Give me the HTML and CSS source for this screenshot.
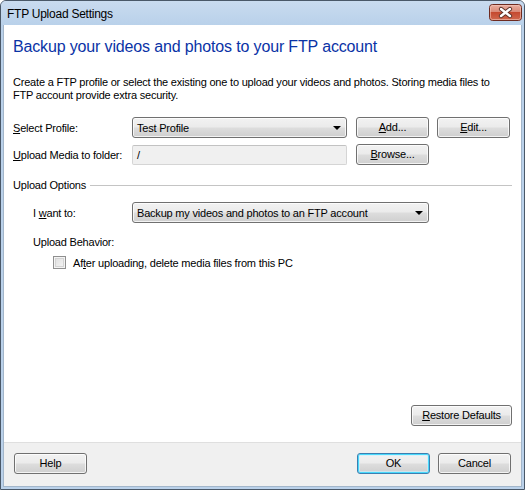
FILE: index.html
```html
<!DOCTYPE html>
<html>
<head>
<meta charset="utf-8">
<link rel="stylesheet" href="styles.css">
</head>
<body>
<div class="window">
  <div class="titlebar">
    <span class="title">FTP Upload Settings</span>
    <span class="close">
      <svg width="33" height="17" viewBox="0 0 33 17">
        <defs>
          <linearGradient id="cg" x1="0" y1="0" x2="0" y2="1">
            <stop offset="0" stop-color="#eab0a2"/>
            <stop offset="0.45" stop-color="#d98a78"/>
            <stop offset="0.5" stop-color="#c54a30"/>
            <stop offset="1" stop-color="#d06a50"/>
          </linearGradient>
        </defs>
        <rect x="0.5" y="0.5" width="32" height="16" rx="3" fill="url(#cg)" stroke="#6e2b20"/>
        <rect x="1.5" y="1.5" width="30" height="14" rx="2" fill="none" stroke="#f3c8bc" stroke-opacity="0.6"/>
        <path d="M12 5 L21 12 M21 5 L12 12" stroke="#5b3128" stroke-width="4.2" stroke-linecap="round"/>
        <path d="M12 5 L21 12 M21 5 L12 12" stroke="#ffffff" stroke-width="2.4" stroke-linecap="round"/>
      </svg>
    </span>
  </div>
  <div class="client">
    <div class="main">
      <h1 class="heading">Backup your videos and photos to your FTP account</h1>
      <p class="desc">Create a FTP profile or select the existing one to upload your videos and photos. Storing media files to<br>FTP account provide extra security.</p>
      <div class="row row-first">
        <span class="lbl"><u>S</u>elect Profile:</span>
        <div class="combo combo-profile"><span class="combo-text">Test Profile</span><span class="arrow"></span></div>
        <button class="btn"><u>A</u>dd...</button>
        <button class="btn"><u>E</u>dit...</button>
      </div>
      <div class="row row-second">
        <span class="lbl"><u>U</u>pload Media to folder:</span>
        <div class="textbox">/</div>
        <button class="btn"><u>B</u>rowse...</button>
      </div>
      <div class="group">
        <span class="group-text">Upload Options</span>
        <span class="rule"></span>
      </div>
      <div class="row row-want">
        <span class="lbl lbl-indent">I <u>w</u>ant to:</span>
        <div class="combo combo-want"><span class="combo-text">Backup my videos and photos to an FTP account</span><span class="arrow"></span></div>
      </div>
      <div class="sub">Upload Behavior:</div>
      <div class="check">
        <span class="box"></span>
        <span>Af<u>t</u>er uploading, delete media files from this PC</span>
      </div>
      <div class="spacer"></div>
      <div class="restore-row">
        <button class="btn btn-restore"><u>R</u>estore Defaults</button>
      </div>
    </div>
    <div class="footer">
      <button class="btn">Help</button>
      <div class="footer-right">
        <button class="btn btn-default">OK</button>
        <button class="btn">Cancel</button>
      </div>
    </div>
  </div>
</div>
</body>
</html>
```
FILE: styles.css
```css
* { box-sizing: border-box; }
html, body { margin: 0; padding: 0; }
body {
  width: 525px;
  height: 490px;
  font-family: "Liberation Sans", Arial, sans-serif;
  font-size: 11px;
  letter-spacing: -0.2px;
  color: #000;
  overflow: hidden;
}
.window {
  width: 525px;
  height: 490px;
  border: 1px solid #4a5868;
  border-radius: 6px 6px 0 0;
  background: #bad1ea;
  padding: 0 2px 2px 2px;
  display: flex;
  flex-direction: column;
}
.titlebar {
  height: 24px;
  flex: none;
  display: flex;
  justify-content: space-between;
  align-items: flex-start;
  padding: 0 2px 0 6px;
  background: linear-gradient(#c9dbef, #b9d1ea);
  margin: 0 -2px;
  border-radius: 5px 5px 0 0;
}
.title {
  font-size: 12px;
  line-height: 14px;
  letter-spacing: -0.25px;
  margin-top: 6px;
  color: #000;
}
.close {
  display: block;
  width: 33px;
  height: 17px;
  margin-top: 3px;
}
.close svg { display: block; }
.client {
  flex: 1;
  display: flex;
  flex-direction: column;
  background: #fff;
  border: 1px solid #a3b6ca;
  border-top: none;
}
.main {
  flex: 1;
  display: flex;
  flex-direction: column;
  padding: 12px 9px 0 9px;
}
.heading {
  margin: 0;
  font-weight: normal;
  font-size: 16px;
  line-height: 20px;
  letter-spacing: -0.15px;
  color: #0a33a6;
}
.desc {
  margin: 19px 0 0 0;
  line-height: 13px;
  white-space: nowrap;
}
.row {
  display: flex;
  align-items: center;
  height: 21px;
}
.row-first { margin-top: 15px; }
.row-second { margin-top: 6px; }
.row-want { margin-top: 10px; }
.lbl {
  width: 119px;
  flex: none;
}
.lbl-indent {
  padding-left: 20px;
}
.btn {
  width: 73px;
  height: 21px;
  flex: none;
  font-family: "Liberation Sans", Arial, sans-serif;
  font-size: 11px;
  letter-spacing: -0.2px;
  color: #000;
  border: 1px solid #707070;
  border-radius: 3px;
  background: linear-gradient(#f2f2f2 0%, #ebebeb 48%, #dddddd 52%, #cfcfcf 100%);
  box-shadow: inset 0 0 0 1px rgba(255,255,255,0.75);
  padding: 0;
  margin: 0;
  line-height: 19px;
  text-align: center;
}
.row .btn { margin-left: 9px; }
.row .btn + .btn { margin-left: 8px; }
.combo {
  height: 21px;
  flex: none;
  border: 1px solid #707070;
  border-radius: 3px;
  background: linear-gradient(#f2f2f2 0%, #ebebeb 48%, #dddddd 52%, #cfcfcf 100%);
  box-shadow: inset 0 0 0 1px rgba(255,255,255,0.75);
  display: flex;
  align-items: center;
  justify-content: space-between;
  padding: 0 5px 0 4px;
}
.combo-profile { width: 215px; }
.combo-want { width: 297px; }
.arrow {
  width: 0;
  height: 0;
  border-left: 4px solid transparent;
  border-right: 4px solid transparent;
  border-top: 4px solid #000;
  margin-top: 1px;
}
.textbox {
  width: 215px;
  height: 20px;
  flex: none;
  border: 1px solid #d5d5d5;
  border-top-color: #c2c2c2;
  border-radius: 2px;
  background: #f0f0f0;
  padding: 0 0 0 4px;
  line-height: 18px;
}
.group {
  display: flex;
  align-items: center;
  margin-top: 14px;
  height: 13px;
}
.group-text { line-height: 13px; }
.rule {
  flex: 1;
  height: 1px;
  background: #c4c4c4;
  margin-left: 4px;
}
.sub {
  margin-top: 13px;
  padding-left: 20px;
  line-height: 13px;
}
.check {
  margin-top: 7px;
  padding-left: 40px;
  display: flex;
  align-items: center;
  gap: 7px;
  height: 13px;
}
.box {
  width: 13px;
  height: 13px;
  flex: none;
  border: 1px solid #8f8f8f;
  background: linear-gradient(135deg, #dcdcdc, #f7f7f7);
  box-shadow: inset 0 0 0 1px #f4f4f4, inset 0 0 0 2px #d3d3d3;
}
.spacer { flex: 1; }
.restore-row {
  display: flex;
  justify-content: flex-end;
  margin-bottom: 16px;
}
.btn-restore { width: 101px; }
.footer {
  flex: none;
  height: 44px;
  background: #f0f0f0;
  border-top: 1px solid #dfdfdf;
  display: flex;
  justify-content: space-between;
  align-items: flex-start;
  padding: 10px 10px 0 10px;
}
.footer-right {
  display: flex;
  gap: 8px;
}
.btn-default {
  border-color: #3c7fb1;
  box-shadow: inset 0 0 0 1px #48d8fb, inset 0 0 0 2px rgba(200,240,255,0.6);
}
u { text-decoration: underline; text-underline-offset: 1px; }
```
